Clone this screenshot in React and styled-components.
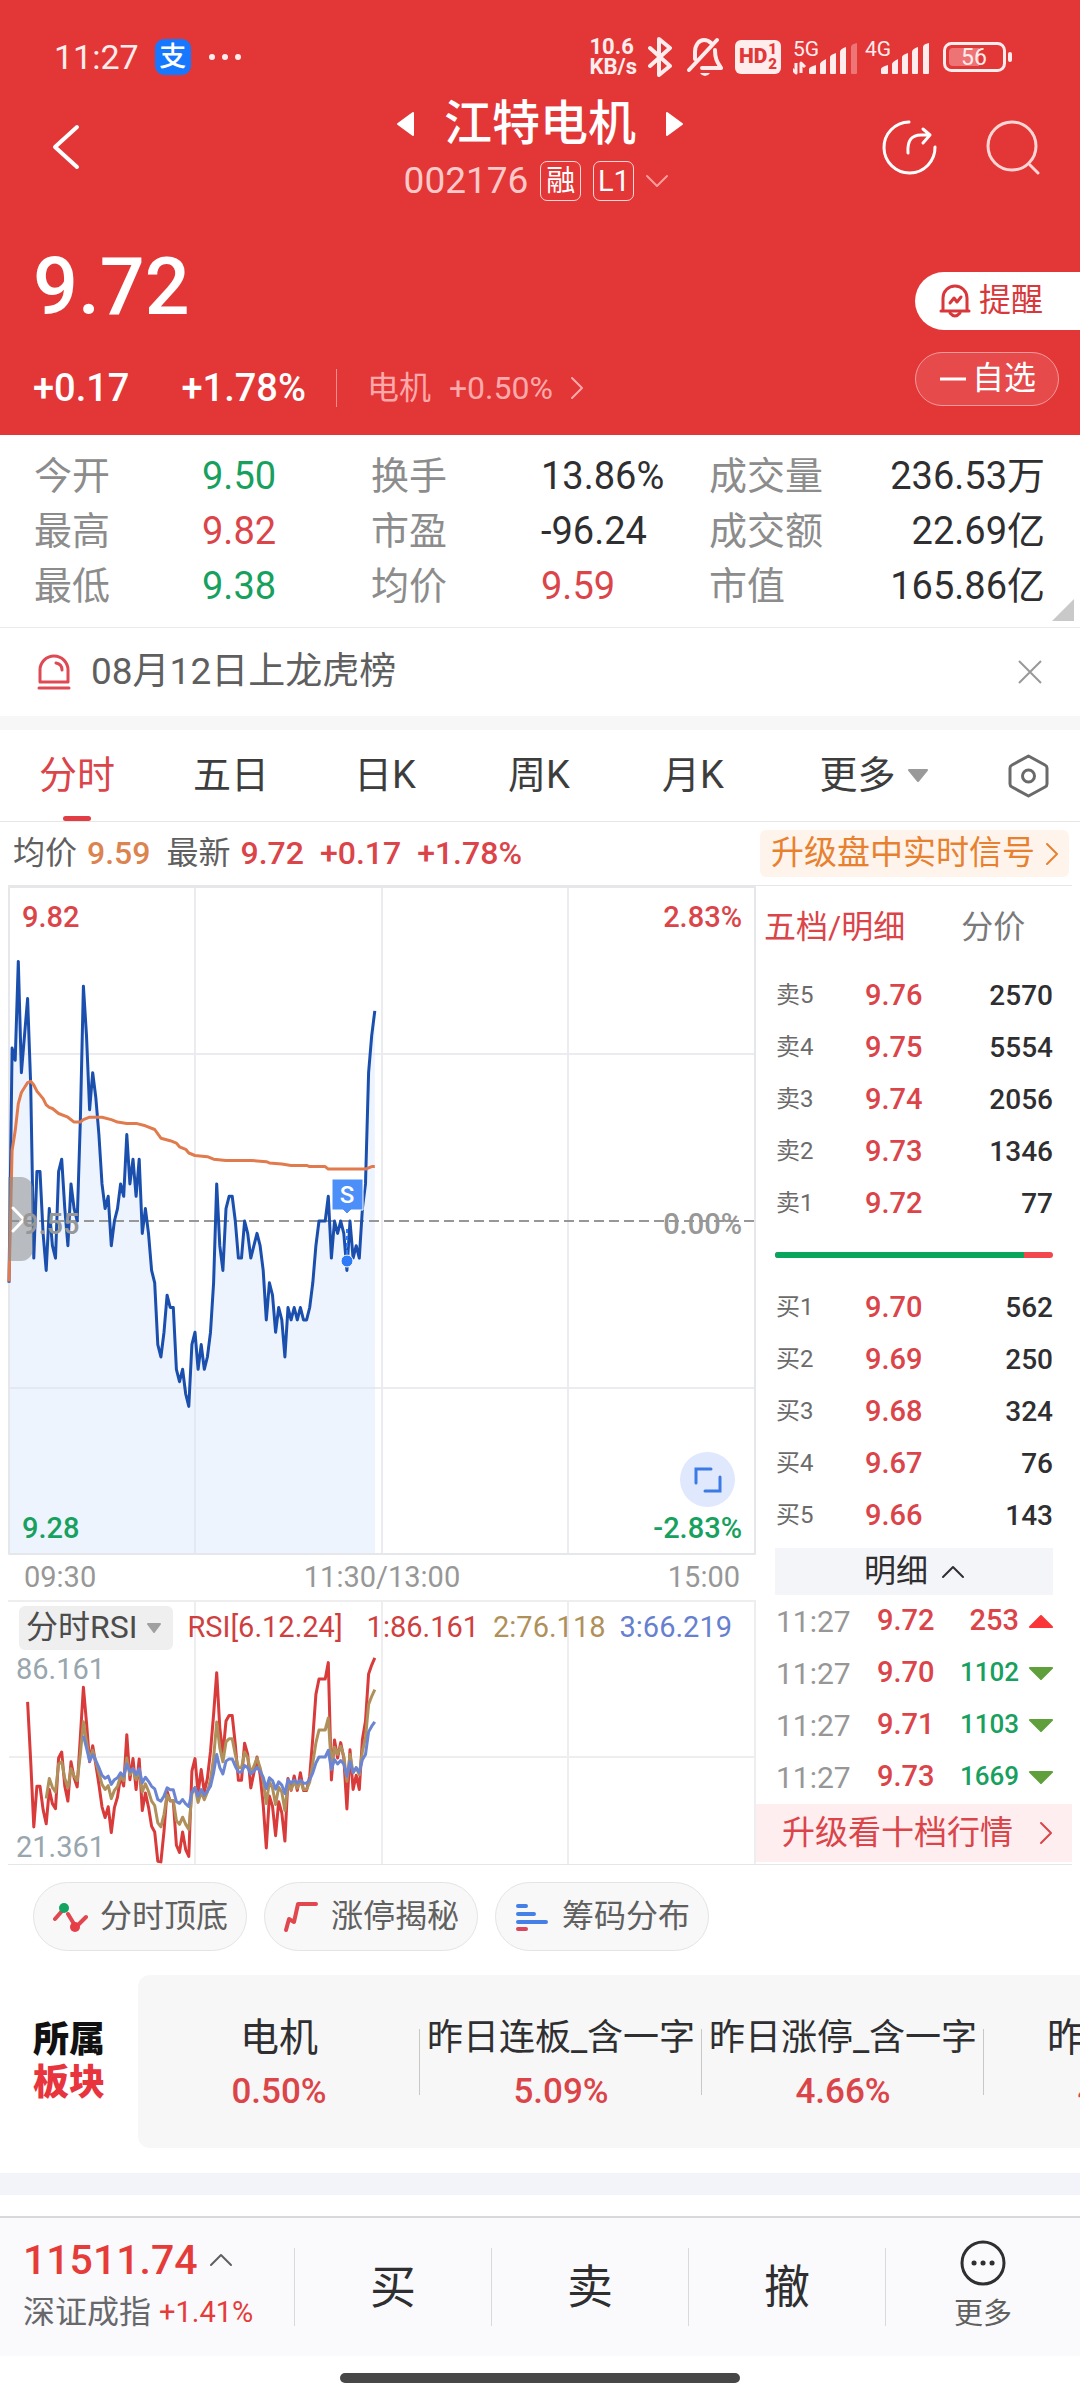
import React from 'react'
import styled, { createGlobalStyle } from 'styled-components'

const red = '#e33637'
const up = '#db4449'
const down = '#17a05e'
const ink = '#2f2f31'
const grey = '#8c8c8c'

const GlobalStyle = createGlobalStyle`
    * {
        box-sizing: border-box;
    }
    body {
        margin: 0;
        background-color: #fff;
        color: ${ink};
        font-family: Roboto, "Noto Sans CJK SC", sans-serif;
        line-height: 1.3;
    }
    button {
        font: inherit;
        color: inherit;
        background: none;
        border: 0;
        padding: 0;
        cursor: pointer;
    }
    a {
        color: inherit;
        text-decoration: none;
    }
    svg {
        display: block;
        flex: none;
    }
    h1, p, dl, dd, ul {
        margin: 0;
        padding: 0;
        list-style: none;
    }
`

// ---------- header ----------
const Header = styled.header`
    background-color: ${red};
    color: #fff;
    padding-bottom: 24px;
`
const StatusBar = styled.div`
    display: flex;
    align-items: center;
    padding: 33px 68px 0 54px;
    height: 81px;
    color: #ffecec;
`
const Clock = styled.span`
    font-size: 34px;
    line-height: 48px;
    margin-right: 16px;
`
const AppBadge = styled.span`
    width: 36px;
    height: 36px;
    border-radius: 9px;
    background-color: #1677ff;
    color: #fff;
    font-size: 27px;
    font-weight: 500;
    line-height: 36px;
    text-align: center;
    margin-right: 17px;
`
const StatusIcons = styled.div`
    display: flex;
    align-items: center;
    margin-left: auto;
`
const NetSpeed = styled.div`
    font-size: 22px;
    font-weight: 700;
    line-height: 20px;
    margin-right: 11px;
`
const HdBadge = styled.span`
    display: flex;
    align-items: center;
    justify-content: center;
    width: 46px;
    height: 34px;
    border-radius: 6px;
    background-color: #ffecec;
    color: ${red};
    font-size: 21px;
    font-weight: 900;
    margin: 0 12px;
`
const HdLines = styled.span`
    display: flex;
    flex-direction: column;
    margin-left: 1px;
    font-size: 15px;
    line-height: 15px;
`
const Signal = styled.span`
    position: relative;
    display: flex;
    align-items: flex-end;
    width: 66px;
    height: 36px;
    margin-right: ${props => props.wide ? '6px' : '12px'};
`
const SignalLabel = styled.span`
    position: absolute;
    left: 0;
    top: 0;
    font-size: 21px;
    line-height: 20px;
`
const TitleBar = styled.div`
    display: grid;
    grid-template-columns: 1fr auto 1fr;
    align-items: center;
    padding: 0 40px 0 54px;
    margin-top: 9px;
`
const TitleBlock = styled.div`
    display: flex;
    flex-direction: column;
    align-items: center;
    margin-right: 14px;
`
const NameRow = styled.div`
    display: flex;
    align-items: center;
    gap: 30px;
`
const StockName = styled.h1`
    font-size: 48px;
    font-weight: 500;
    line-height: 68px;
`
const CodeRow = styled.div`
    display: flex;
    align-items: center;
    gap: 12px;
    margin-right: 8px;
    font-size: 37px;
    line-height: 46px;
    color: #ffc9c9;
`
const Tag = styled.span`
    width: 41px;
    height: 40px;
    border: 1px solid #ffd5d5;
    border-radius: 7px;
    color: #fff;
    font-size: 29px;
    line-height: 38px;
    text-align: center;
`
const HeaderTools = styled.div`
    display: flex;
    justify-content: flex-end;
    gap: 49px;
`
const IconButton = styled.button`
    display: flex;
`
const PriceArea = styled.div`
    display: flex;
    justify-content: space-between;
    margin-top: 43px;
`
const PriceBlock = styled.div`
    padding-left: 33px;
`
const BigPrice = styled.div`
    font-size: 79px;
    font-weight: 500;
    line-height: 80px;
`
const ChangeRow = styled.div`
    display: flex;
    align-items: center;
    margin-top: 38px;
    font-size: 38px;
    font-weight: 500;
    line-height: 46px;
`
const Change = styled.span`
    margin-right: ${props => props.gap};
`
const SectorLink = styled.a`
    display: flex;
    align-items: center;
    gap: 18px;
    margin-left: 30px;
    font-size: 32px;
    font-weight: 400;
    color: #ffa9aa;
`
const Bar = styled.span`
    width: 1px;
    height: 38px;
    background-color: #f58d8e;
`
const HeaderActions = styled.div`
    display: flex;
    flex-direction: column;
    align-items: flex-start;
    gap: 22px;
    padding-top: 25px;
`
const RemindButton = styled.button`
    display: flex;
    align-items: center;
    gap: 8px;
    height: 58px;
    padding: 0 37px 0 24px;
    border-radius: 29px 0 0 29px;
    background-color: #fff;
    color: #d8383b;
    font-size: 32px;
`
const WatchButton = styled.button`
    display: flex;
    align-items: center;
    gap: 6px;
    height: 54px;
    padding: 0 22px 0 24px;
    border: 1px solid #f59a9b;
    border-radius: 27px;
    background-color: #e64a4b;
    color: #fff;
    font-size: 32px;
`

// ---------- quote figures ----------
const Stats = styled.dl`
    position: relative;
    display: grid;
    grid-template-columns: 168fr 169fr 170fr 168fr 130fr 206fr;
    padding: 14px 35px 13px 34px;
    border-bottom: 1px solid #ebebeb;
    font-size: 38px;
    line-height: 55px;
    white-space: nowrap;
`
const StatLabel = styled.dt`
    color: ${grey};
`
const StatValue = styled.dd`
    color: ${props => props.tone || ink};
    text-align: ${props => props.end ? 'right' : 'left'};
`
const Corner = styled.span`
    position: absolute;
    right: 6px;
    bottom: 6px;
    border-left: 22px solid transparent;
    border-bottom: 22px solid #c9c9c9;
`
const Notice = styled.div`
    display: flex;
    align-items: center;
    gap: 20px;
    height: 88px;
    padding: 0 37px;
    font-size: 37px;
    color: #5f5f5f;
`
const NoticeText = styled.p`
    flex: 1;
`
const Band = styled.div`
    height: ${props => props.size};
    background-color: ${props => props.tint};
`

// ---------- period tabs ----------
const Tabs = styled.nav`
    display: grid;
    grid-template-columns: repeat(5, 154fr) 207fr 103fr;
    height: 92px;
    border-bottom: 1px solid #e6e6e6;
`
const Tab = styled.button`
    position: relative;
    display: flex;
    align-items: center;
    justify-content: center;
    gap: 12px;
    font-size: 38px;
    color: ${props => props.active ? up : '#3d3d3d'};
    &::after {
        content: "";
        position: absolute;
        bottom: 0;
        width: 28px;
        height: 5px;
        border-radius: 3px;
        background-color: ${props => props.active ? '#e23c45' : 'transparent'};
    }
`
const InfoLine = styled.div`
    display: flex;
    align-items: center;
    height: 64px;
    margin: 0 8px;
    padding: 0 3px 0 5px;
    border-bottom: 1px solid #e6e6e6;
    font-size: 32px;
    color: #5f5f5f;
    white-space: nowrap;
`
const Info = styled.span`
    color: ${props => props.tone};
    font-weight: 500;
    margin: 0 16px 0 ${props => props.before || '0'};
`
const SignalLink = styled.a`
    display: flex;
    align-items: center;
    gap: 11px;
    height: 47px;
    margin-left: auto;
    padding: 0 11px;
    border-radius: 6px;
    background-color: #fff4ec;
    color: #e8812f;
    font-size: 33px;
`

// ---------- chart ----------
const Board = styled.main`
    display: grid;
    grid-template-columns: minmax(0, 748fr) minmax(0, 316fr);
    margin: 0 8px;
    border-bottom: 1px solid #e6e6e6;
`
const Plot = styled.div`
    position: relative;
    height: ${props => props.size};
`
const PlotSvg = styled.svg`
    position: absolute;
    left: 0;
    top: 0;
    width: 100%;
    height: 100%;
    overflow: visible;
`
const PlotLabel = styled.span`
    position: absolute;
    top: ${props => props.top};
    ${props => props.end ? 'right: 14px' : 'left: 14px'};
    font-size: 29px;
    font-weight: 500;
    line-height: 32px;
    color: ${props => props.tone};
`
const Handle = styled.button`
    position: absolute;
    left: 0;
    top: 291px;
    display: flex;
    align-items: center;
    width: 25px;
    height: 84px;
    padding-left: 4px;
    border-radius: 0 12px 12px 0;
    background-color: rgba(140, 140, 140, 0.55);
`
const ExpandButton = styled.button`
    position: absolute;
    right: 21px;
    bottom: 48px;
    display: flex;
    align-items: center;
    justify-content: center;
    width: 55px;
    height: 55px;
    border-radius: 50%;
    background-color: #dfe8fd;
`
const TimeAxis = styled.div`
    display: flex;
    justify-content: space-between;
    padding: 0 16px;
    height: 45px;
    font-size: 29px;
    line-height: 45px;
    color: #979797;
`
const RsiHead = styled.div`
    position: relative;
    display: flex;
    align-items: center;
    gap: 14px;
    padding: 6px 0 0 11px;
    white-space: nowrap;
`
const RsiSelect = styled.button`
    display: flex;
    align-items: center;
    gap: 10px;
    height: 44px;
    padding: 0 12px 0 7px;
    border-radius: 6px;
    background-color: #efefef;
    font-size: 32px;
    color: #4c4c4c;
`
const RsiValue = styled.span`
    color: ${props => props.tone};
    margin-right: ${props => props.after || '0'};
    font-size: 29px;
`
const RsiLabel = styled.span`
    position: absolute;
    left: 8px;
    top: ${props => props.top};
    font-size: 29px;
    line-height: 32px;
    color: #98a6ae;
`

// ---------- order book ----------
const Side = styled.aside`
    display: flex;
    flex-direction: column;
`
const SideTabs = styled.div`
    display: flex;
    gap: 56px;
    height: 84px;
    padding-left: 8px;
`
const SideTab = styled.button`
    font-size: 32px;
    color: ${props => props.active ? up : '#7a7a7a'};
    white-space: nowrap;
`
const Book = styled.table`
    margin: 0 19px 0 20px;
    border-collapse: collapse;
    table-layout: fixed;
    td, th {
        height: 52px;
        padding: 0;
        font-weight: 400;
        text-align: left;
        white-space: nowrap;
    }
`
const Level = styled.th`
    width: 89px;
    font-size: 24px;
    color: #6b6b6b;
`
const Price = styled.td`
    font-size: 29px;
    font-weight: 500 !important;
    color: ${up};
`
const Qty = styled.td`
    font-size: 28px;
    font-weight: 500 !important;
    text-align: right !important;
`
const Ratio = styled.div`
    display: flex;
    height: 6px;
    margin: 22px 19px 24px;
    border-radius: 3px;
    overflow: hidden;
    background-color: #f2484d;
`
const RatioSell = styled.span`
    background-color: #08a65d;
`
const DetailToggle = styled.button`
    display: flex;
    align-items: center;
    justify-content: center;
    gap: 14px;
    height: 47px;
    margin: 6px 19px 0;
    background-color: #f4f5f9;
    font-size: 32px;
`
const Time = styled.td`
    width: 101px;
    font-size: 30px;
    color: #979797;
`
const TradePrice = styled(Price)`
    width: 70px;
`
const Volume = styled.td`
    font-size: ${props => props.rise ? '29px' : '26px'};
    font-weight: 500 !important;
    color: ${props => props.rise ? up : down};
    text-align: right !important;
`
const Arrow = styled.td`
    width: 34px;
    svg {
        margin-left: auto;
    }
`
const TenLink = styled.a`
    display: flex;
    align-items: center;
    justify-content: space-between;
    height: 58px;
    margin-top: 1px;
    padding: 0 20px 0 26px;
    background-color: #feeeef;
    color: ${up};
    font-size: 33px;
    white-space: nowrap;
`

// ---------- lower part ----------
const Chips = styled.div`
    display: flex;
    gap: 17px;
    padding: 17px 33px 24px;
`
const Chip = styled.button`
    display: flex;
    align-items: center;
    gap: 12px;
    height: 69px;
    padding: 0 18px;
    border: 1px solid #e4e4e4;
    border-radius: 35px;
    background-color: #f8f8f8;
    color: #606060;
    font-size: 32px;
`
const Sectors = styled.section`
    display: flex;
    align-items: center;
    padding: 0 0 25px 33px;
    overflow: hidden;
`
const SectorTitle = styled.div`
    flex: none;
    width: 105px;
    font-size: 36px;
    font-weight: 900;
    line-height: 43px;
    color: #111;
`
const Hot = styled.div`
    color: #e8343d;
`
const SectorList = styled.ul`
    flex: 1;
    display: flex;
    min-width: 0;
    overflow: hidden;
    height: 173px;
    align-items: center;
    padding-top: 6px;
    border-radius: 12px 0 0 12px;
    background-color: #f7f7f7;
`
const Sector = styled.li`
    position: relative;
    flex: none;
    width: 282px;
    text-align: center;
    white-space: nowrap;
    &:not(:last-child)::after {
        content: "";
        position: absolute;
        right: 0;
        top: 18px;
        width: 1px;
        height: 66px;
        background-color: #c8c8c8;
    }
`
const SectorName = styled.div`
    font-size: ${props => props.long ? '36px' : '39px'};
    line-height: 54px;
`
const SectorChange = styled.div`
    font-size: 35px;
    font-weight: 500;
    line-height: 54px;
    color: ${up};
`
const BottomBar = styled.footer`
    display: grid;
    grid-template-columns: 294fr 197fr 197fr 197fr 195fr;
    align-items: center;
    height: 140px;
    margin-top: 21px;
    border-top: 2px solid #d9d9db;
    background-color: #fafafc;
`
const IndexBlock = styled.button`
    padding-left: 23px;
    text-align: left;
    white-space: nowrap;
`
const IndexValue = styled.div`
    display: flex;
    align-items: center;
    gap: 12px;
    font-size: 41px;
    font-weight: 500;
    line-height: 50px;
    color: #e53c3a;
`
const IndexName = styled.div`
    display: flex;
    align-items: center;
    gap: 8px;
    font-size: 32px;
    line-height: 54px;
    color: #68686c;
`
const IndexChange = styled.span`
    font-size: 29px;
    color: #e53c3a;
`
const TradeButton = styled.button`
    height: 78px;
    border-left: 1px solid #d9d9db;
    font-size: 46px;
    line-height: 60px;
`
const MoreButton = styled(TradeButton)`
    display: flex;
    flex-direction: column;
    align-items: center;
    justify-content: center;
    gap: 8px;
    font-size: 29px;
    line-height: 40px;
    color: #606060;
`
const HomeArea = styled.div`
    padding: 17px 0 16px;
`
const HomeIndicator = styled.div`
    width: 37%;
    height: 10px;
    margin: 0 auto;
    border-radius: 5px;
    background-color: #474747;
`

// ---------- icons ----------
const Chevron = ({ dir = 'right', w, h, color, stroke = 3 }) => {
    const points = {
        right: `1,1 ${w - 1},${h / 2} 1,${h - 1}`,
        left: `${w - 1},1 1,${h / 2} ${w - 1},${h - 1}`,
        up: `1,${h - 1} ${w / 2},1 ${w - 1},${h - 1}`,
        down: `1,1 ${w / 2},${h - 1} ${w - 1},1`,
    }
    return (
        <svg width={w} height={h} overflow="visible" fill="none" stroke={color} strokeWidth={stroke} strokeLinecap="round" strokeLinejoin="round">
            <polyline points={points[dir]} />
        </svg>
    )
}

const Triangle = ({ dir, w, h, color }) => {
    const points = {
        left: `${w - 1},1 1,${h / 2} ${w - 1},${h - 1}`,
        right: `1,1 ${w - 1},${h / 2} 1,${h - 1}`,
        up: `1,${h - 1} ${w / 2},1 ${w - 1},${h - 1}`,
        down: `1,1 ${w - 1},1 ${w / 2},${h - 1}`,
    }
    return (
        <svg width={w} height={h} fill={color} stroke={color} strokeWidth="2" strokeLinejoin="round">
            <polygon points={points[dir]} />
        </svg>
    )
}

const SignalBars = ({ weak }) => (
    <svg width="66" height="36" fill="currentColor">
        <path d="M16 34v-4q0-2 7-4v8q0 1-1 1h-5q-1 0-1-1z" />
        <path d="M27 34V25q0-2 6-5v14q0 1-1 1h-4q-1 0-1-1z" />
        <path d="M37 34V18q0-2 6-4v20q0 1-1 1h-4q-1 0-1-1z" />
        <path d="M47 34V13q0-3 6-5v26q0 1-1 1h-4q-1 0-1-1z" />
        <path d="M58 34V8q0-3 6-4v30q0 1-1 1h-4q-1 0-1-1z" opacity={weak ? 0.35 : 1} />
        {weak && <path d="M3 24v10l-4-4M8 34V24l4 4" fill="none" stroke="currentColor" strokeWidth="3" strokeLinejoin="round" />}
    </svg>
)

const Bluetooth = () => (
    <svg width="24" height="40" fill="none" stroke="currentColor" strokeWidth="4" strokeLinejoin="round" strokeLinecap="round">
        <path d="M2 11l20 18-11 9V2l11 9L2 29" />
    </svg>
)

const BellOff = () => (
    <svg width="36" height="40" fill="none" stroke="currentColor" strokeWidth="4" strokeLinecap="round" strokeLinejoin="round">
        <path d="M8 22v-7C8 8 12 3 17 3c3 0 5 1 7 3M28 13c0 10 3 13 6 18H15M2 33L30 3" />
        <path d="M13 36h10q-2 3-5 3t-5-3z" fill="currentColor" stroke="none" />
    </svg>
)

const Battery = () => (
    <svg width="69" height="30" fill="none">
        <rect x="1.500" y="1.500" width="60" height="27" rx="7" stroke="currentColor" strokeWidth="3" />
        <path d="M10 6h26v18H10q-4 0-4-4V10q0-4 4-4z" fill="#ee7374" />
        <rect x="65" y="10" width="4" height="10" rx="2" fill="currentColor" />
        <text x="31" y="23" textAnchor="middle" fontSize="23" fill="currentColor">56</text>
    </svg>
)

const ShareIcon = () => (
    <svg width="55" height="55" fill="none" stroke="#fff" strokeWidth="3" strokeLinecap="round" strokeLinejoin="round">
        <path d="M27 2A25.500 25.500 0 1 0 53 27" />
        <path d="M26 33c-1-13 4-18 13-18h9M41 9l7 6-7 8" />
    </svg>
)

const SearchIcon = () => (
    <svg width="54" height="55" fill="none" stroke="#ffd5d5" strokeWidth="3" strokeLinecap="round">
        <circle cx="26" cy="26" r="24" />
        <path d="M44 45l8 8" />
    </svg>
)

const BellIcon = () => (
    <svg width="32" height="34" fill="none" stroke="#d8383b" strokeWidth="3" strokeLinecap="round" strokeLinejoin="round">
        <path d="M4 25V14a12 12 0 0 1 24 0v11M2 27h28" />
        <path d="M11 29q5 6 10 0M11 19l4-5 3 4 4-5" />
    </svg>
)

const AlarmIcon = () => (
    <svg width="34" height="36" fill="none" stroke="#dd4a53" strokeWidth="3" strokeLinecap="round" strokeLinejoin="round">
        <path d="M3 28V16a14 14 0 0 1 28 0v12zM2 34h30M19 9q6 1 6 7" />
    </svg>
)

const CloseIcon = () => (
    <svg width="26" height="26" stroke="#999" strokeWidth="2">
        <path d="M2 2l22 22M24 2L2 24" />
    </svg>
)

const HexIcon = () => (
    <svg width="41" height="44" fill="none" stroke="#6a6a6a" strokeWidth="3" strokeLinejoin="round">
        <path d="M20.500 2L37 11q2 1 2 3v16q0 2-2 3L20.500 42 4 33q-2-1-2-3V14q0-2 2-3z" />
        <circle cx="20.500" cy="22" r="6" />
    </svg>
)

const PeakIcon = () => (
    <svg width="36" height="34" fill="none" strokeWidth="4" strokeLinecap="round">
        <path d="M3 19l7-8M16 14l6 10M26 25l8-8" stroke="#e0474e" />
        <circle cx="12" cy="8" r="5" fill="#12a461" />
        <circle cx="23" cy="27" r="5" fill="#e73d47" />
    </svg>
)

const LimitIcon = () => (
    <svg width="36" height="34" fill="none" stroke="#e0474e" strokeWidth="4" strokeLinecap="round" strokeLinejoin="round">
        <path d="M3 30l3-11 5 3 4-18h18" />
    </svg>
)

const StackIcon = () => (
    <svg width="36" height="34" fill="none" stroke="#4580e6" strokeWidth="4" strokeLinecap="round">
        <path d="M4 6h8M4 14h16M4 22h28" />
        <path d="M4 29h8" stroke="#d9485a" />
    </svg>
)

const MoreIcon = () => (
    <svg width="46" height="46" fill="none" stroke={ink} strokeWidth="3">
        <circle cx="23" cy="23" r="21" />
        <path d="M14 23h.1M23 23h.1M32 23h.1" strokeWidth="5" strokeLinecap="round" />
    </svg>
)

// ---------- data ----------
const stats = [
    ['今开', '9.50', down], ['换手', '13.86%'], ['成交量', '236.53万'],
    ['最高', '9.82', up], ['市盈', '-96.24'], ['成交额', '22.69亿'],
    ['最低', '9.38', down], ['均价', '9.59', up], ['市值', '165.86亿'],
]

const sells = [['卖5', '9.76', 2570], ['卖4', '9.75', 5554], ['卖3', '9.74', 2056], ['卖2', '9.73', 1346], ['卖1', '9.72', 77]]
const buys = [['买1', '9.70', 562], ['买2', '9.69', 250], ['买3', '9.68', 324], ['买4', '9.67', 76], ['买5', '9.66', 143]]
const trades = [['9.72', 253, true], ['9.70', 1102], ['9.71', 1103], ['9.73', 1669]]
const sectors = [['电机', '0.50%'], ['昨日连板_含一字', '5.09%'], ['昨日涨停_含一字', '4.66%'], ['昨日涨停', '4.25%']]

// price per minute, in cents away from the previous close (9.55)
const ticks = [
    -5, 14, 13, 21, 12, 15, 18, 11, -3, 4, 4, -1, -4, 1, -2, -3, 4, 5, 1, -2, 3, 1, 0, 8, 19, 15, 9, 12, 10, 7,
    3, 1, 2, -2, 0, 1, 3, 2, 7, 3, 5, 2, 5, -1, 1, -1, -4, -5, -10, -11, -9, -6, -7, -7, -12, -13, -12, -14, -15, -10,
    -9, -12, -10, -12, -11, -9, -5, 3, -2, -4, 1, 2, 2, 0, -3, -3, 0, -1, -3, -2, -1, -2, -4, -8, -5, -6, -9, -7, -8, -11,
    -7, -8, -7, -8, -7, -8, -8, -7, -5, -2, 0, 0, 0, 2, -3, 0, -1, 0, -1, -4, 0, -3, -2, -3, 1, 3, 12, 15, 17,
]
const average = [
    [0, -4.9], [1, 5.7], [2, 7.3], [3, 9.5], [4, 10.4], [5, 10.8], [6, 11.2], [7, 11.3], [8, 11], [9, 10.5], [10, 10.2], [11, 9.9],
    [12, 9.4], [13, 9.2], [14, 9.1], [16, 8.7], [19, 8.4], [21, 8], [23, 8], [24, 8.2], [26, 8.4], [30, 8.4], [33, 8.2], [35, 8],
    [38, 7.9], [41, 7.9], [44, 7.7], [47, 7.4], [49, 6.7], [52, 6.5], [54, 6.3], [55, 6], [57, 5.8], [58, 5.5], [60, 5.3], [64, 5.2],
    [66, 5], [70, 4.9], [78, 4.9], [83, 4.8], [84, 4.7], [88, 4.6], [91, 4.5], [96, 4.5], [97, 4.4], [102, 4.4], [103, 4.2],
    [113, 4.2], [115, 4.2], [117, 4.4], [118, 4.4],
]
const rsi6 = [
    72.2, 53.4, 32.5, 45.4, 45.4, 38, 33.5, 44.4, 39.9, 38.3, 54.4, 56.3, 45.4, 40.7, 53.2, 48.1, 45.2, 60.8, 76.9, 65.6,
    53.2, 58.3, 52.3, 46, 38.9, 35.5, 38.9, 30.7, 38.6, 42, 48.6, 45.5, 61.8, 47.5, 54.2, 44.4, 54.1, 37.7, 43.3, 38.8,
    32.7, 30.9, 21.6, 21.4, 31.1, 43.8, 40.7, 40.7, 26.7, 24.4, 30.9, 25.3, 23.1, 50.2, 54.2, 43.3, 50.7, 43.6, 47.9, 56.5,
    68.2, 81.5, 64, 55.5, 66.1, 67.9, 67.9, 58.7, 47.3, 47.3, 59.1, 55.5, 44.9, 49.7, 54.7, 49.1, 39.6, 25.8, 42.3, 39.1,
    29.7, 40.5, 37, 28, 47.9, 44.1, 48.7, 44.1, 49.7, 44.1, 44.1, 48.6, 60.8, 74.6, 79.5, 79.5, 79.5, 84.7, 47.4, 60.1,
    54.4, 59.3, 54.4, 38.2, 57, 44.4, 48.9, 44.4, 60.3, 66.1, 81.1, 83.9, 86.2,
]
const rsi12 = [
    41.5, 47.9, 45.1, 43.6, 52.5, 53.2, 47.9, 44.9, 51, 48.6, 47.2, 55.5, 65.9, 59.7, 53.9, 56.8, 53.2, 49.7, 46, 44.4,
    45.6, 41.5, 44.1, 45.4, 48.6, 47.2, 54.4, 49.1, 51, 47.5, 50.7, 43.6, 46.2, 43.8, 40.7, 39.3, 33.8, 32.5, 36.4, 42.6,
    40.9, 40.9, 34.5, 33.3, 35.6, 33.3, 31.7, 43, 45.1, 40.3, 43.6, 41.1, 43.6, 47.5, 54.4, 65.8, 57.6, 53.2, 59.5, 60.5,
    60.5, 55.5, 51.3, 51.3, 56.3, 54.4, 49.6, 51.8, 54.4, 51.3, 47, 39.9, 46.8, 44.9, 39.6, 45.1, 43.6, 37.7, 46.5, 44.4,
    46.8, 44.8, 47.2, 44.4, 44.4, 46.8, 52.8, 59.2, 63.3, 63.3, 63.3, 67.1, 51.8, 57.8, 55.5, 58.1, 55, 47, 55.5, 49.7,
    51.3, 49.1, 56.5, 60.8, 71.4, 74, 76.1,
]
const rsi24 = [
    61.5, 57.6, 53.4, 55.5, 53.6, 51.3, 48.9, 47.9, 48.6, 46, 47.5, 48.1, 49.7, 48.6, 52.5, 50, 51, 49.1, 51, 46.5,
    48.3, 47, 45.4, 44.6, 41.2, 40.7, 42.3, 44.9, 44.3, 44.3, 40.5, 40, 41.2, 39.8, 39, 43.6, 44.9, 42.3, 44.4, 42.6,
    43.8, 45.4, 49.7, 55.5, 51.3, 49.3, 53.4, 54.1, 54.1, 51.8, 49.9, 49.9, 52, 51.3, 49.3, 50.2, 51.4, 50.2, 48.3, 44.7,
    48.1, 47.2, 44.5, 46.8, 45.8, 43.1, 47.5, 46.4, 47.4, 46.4, 47.4, 46.4, 46.4, 47.5, 49.7, 52.8, 54.7, 54.7, 54.7, 56.8,
    50.7, 53.9, 52.5, 53.6, 52.5, 48.6, 53.2, 49.8, 51.3, 49.8, 53.9, 55.5, 62.7, 64.5, 65.9,
]

const minuteX = minute => 1 + minute * 3.1
const tickY = tick => 335 - tick * 12.36
const rsiY = value => 58 + (86.16 - value) * 3.148
const rsiLine = (values, start) => values.map((v, i) => `${minuteX(start + i).toFixed(1)},${rsiY(v).toFixed(1)}`).join(' ')

const PriceChart = () => {
    const line = ticks.map((t, i) => `${minuteX(i).toFixed(1)},${tickY(t).toFixed(1)}`).join(' ')
    const avg = average.map(([m, t]) => `${minuteX(m).toFixed(1)},${tickY(t).toFixed(1)}`).join(' ')
    return (
        <Plot size="669px">
            <PlotSvg viewBox="0 0 748 669" preserveAspectRatio="none" fill="none" strokeLinejoin="round">
                <polygon points={`1,668 ${line} 367,668`} fill="#eef4fe" />
                <path d="M187 1v667M374 1v667M560 1v667M1 168h746M1 502h746" stroke="#dde0e6" strokeOpacity="0.6" strokeWidth="2" />
                <rect x="1" y="1" width="746" height="667" stroke="#e6e7ea" strokeWidth="2" />
                <path d="M1 335h746" stroke="#979797" strokeWidth="2" strokeDasharray="10 5" />
                <polyline points={line} stroke="#1b4fae" strokeWidth="3" />
                <polyline points={avg} stroke="#e17a4c" strokeWidth="3" />
                <path d="M339 343v28" stroke="#2d7bf7" strokeWidth="2" strokeDasharray="4 3" />
                <path d="M324 293h31v31h-12l-4 4-4-4h-11z" fill="#4d8ff9" stroke="#fff" strokeWidth="1" />
                <text x="339" y="317" textAnchor="middle" fontSize="24" fontWeight="500" fill="#fff">S</text>
                <circle cx="339" cy="375" r="6" fill="#2d7bf7" stroke="#fff" />
            </PlotSvg>
            <Handle aria-label="展开">
                <Chevron w={13} h={25} color="#fff" />
            </Handle>
            <PlotLabel top="15px" tone={up}>9.82</PlotLabel>
            <PlotLabel top="15px" tone={up} end>2.83%</PlotLabel>
            <PlotLabel top="322px" tone="#979797">9.55</PlotLabel>
            <PlotLabel top="322px" tone="#979797" end>0.00%</PlotLabel>
            <PlotLabel top="626px" tone={down}>9.28</PlotLabel>
            <PlotLabel top="626px" tone={down} end>-2.83%</PlotLabel>
            <ExpandButton aria-label="全屏">
                <svg width="28" height="28" fill="none" stroke="#3c7ae4" strokeWidth="3" strokeLinecap="round">
                    <path d="M2 17V3h15M26 11v14H11" />
                </svg>
            </ExpandButton>
        </Plot>
    )
}

const RsiChart = () => (
    <Plot size="264px">
        <PlotSvg viewBox="0 0 748 264" preserveAspectRatio="none" fill="none" strokeLinejoin="round">
            <path d="M0 1h748M1 157h746M187 1v263M374 1v263M560 1v263M747 1v263" stroke="#eeeef0" strokeWidth="2" />
            <polyline points={rsiLine(rsi6, 6)} stroke="#d93a3a" strokeWidth="3" />
            <polyline points={rsiLine(rsi12, 12)} stroke="#b0905a" strokeWidth="3" />
            <polyline points={rsiLine(rsi24, 24)} stroke="#6c85d2" strokeWidth="3" />
        </PlotSvg>
        <RsiHead>
            <RsiSelect>分时RSI<Triangle dir="down" w={14} h={10} color="#a0a0a0" /></RsiSelect>
            <RsiValue tone="#cf3f40" after="10px">RSI[6.12.24]</RsiValue>
            <RsiValue tone="#cf3f40">1:86.161</RsiValue>
            <RsiValue tone="#b0905a">2:76.118</RsiValue>
            <RsiValue tone="#6680cf">3:66.219</RsiValue>
        </RsiHead>
        <RsiLabel top="53px">86.161</RsiLabel>
        <RsiLabel top="231px">21.361</RsiLabel>
    </Plot>
)

const BookTable = ({ rows }) => (
    <Book>
        <tbody>
            {rows.map(([level, price, qty]) => (
                <tr key={level}>
                    <Level scope="row">{level}</Level>
                    <Price>{price}</Price>
                    <Qty>{qty}</Qty>
                </tr>
            ))}
        </tbody>
    </Book>
)

const App = () => {
    const [period, setPeriod] = React.useState('分时')
    const [noticeOpen, setNoticeOpen] = React.useState(true)

    return (
        <>
            <GlobalStyle />
            <Header>
                <StatusBar>
                    <Clock>11:27</Clock>
                    <AppBadge>支</AppBadge>
                    <svg width="34" height="8" fill="currentColor">
                        <circle cx="4" cy="4" r="3" />
                        <circle cx="17" cy="4" r="3" />
                        <circle cx="30" cy="4" r="3" />
                    </svg>
                    <StatusIcons>
                        <NetSpeed>10.6<br />KB/s</NetSpeed>
                        <Bluetooth />
                        <svg width="15" height="1" />
                        <BellOff />
                        <HdBadge>HD<HdLines><span>1</span><span>2</span></HdLines></HdBadge>
                        <Signal wide>
                            <SignalLabel>5G</SignalLabel>
                            <SignalBars weak />
                        </Signal>
                        <Signal>
                            <SignalLabel>4G</SignalLabel>
                            <SignalBars />
                        </Signal>
                        <Battery />
                    </StatusIcons>
                </StatusBar>
                <TitleBar>
                    <IconButton aria-label="返回"><Chevron dir="left" w={24} h={42} color="#fff" stroke={4} /></IconButton>
                    <TitleBlock>
                        <NameRow>
                            <IconButton aria-label="上一只"><Triangle dir="left" w={17} h={24} color="#fff" /></IconButton>
                            <StockName>江特电机</StockName>
                            <IconButton aria-label="下一只"><Triangle dir="right" w={17} h={24} color="#fff" /></IconButton>
                        </NameRow>
                        <CodeRow>
                            002176
                            <Tag>融</Tag>
                            <Tag>L1</Tag>
                            <Chevron dir="down" w={22} h={12} color="#ff9c9d" stroke={2} />
                        </CodeRow>
                    </TitleBlock>
                    <HeaderTools>
                        <IconButton aria-label="分享"><ShareIcon /></IconButton>
                        <IconButton aria-label="搜索"><SearchIcon /></IconButton>
                    </HeaderTools>
                </TitleBar>
                <PriceArea>
                    <PriceBlock>
                        <BigPrice>9.72</BigPrice>
                        <ChangeRow>
                            <Change gap="52px">+0.17</Change>
                            <Change gap="30px">+1.78%</Change>
                            <Bar />
                            <SectorLink href="#">
                                <span>电机</span>
                                <span>+0.50%</span>
                                <Chevron w={12} h={22} color="#ffa9aa" stroke={2} />
                            </SectorLink>
                        </ChangeRow>
                    </PriceBlock>
                    <HeaderActions>
                        <RemindButton><BellIcon />提醒</RemindButton>
                        <WatchButton>
                            <svg width="26" height="4"><path d="M0 2h26" stroke="#fff" strokeWidth="3" /></svg>
                            自选
                        </WatchButton>
                    </HeaderActions>
                </PriceArea>
            </Header>

            <Stats>
                {stats.map(([label, value, tone], i) => (
                    <React.Fragment key={label}>
                        <StatLabel>{label}</StatLabel>
                        <StatValue tone={tone} end={i % 3 === 2}>{value}</StatValue>
                    </React.Fragment>
                ))}
                <Corner />
            </Stats>
            {noticeOpen && (
                <Notice>
                    <AlarmIcon />
                    <NoticeText>08月12日上龙虎榜</NoticeText>
                    <IconButton aria-label="关闭" onClick={() => setNoticeOpen(false)}><CloseIcon /></IconButton>
                </Notice>
            )}
            <Band size="14px" tint="#f7f7f7" />

            <Tabs>
                {['分时', '五日', '日K', '周K', '月K'].map(name => (
                    <Tab key={name} active={period === name} onClick={() => setPeriod(name)}>{name}</Tab>
                ))}
                <Tab>更多<Triangle dir="down" w={20} h={13} color="#9a9a9a" /></Tab>
                <Tab aria-label="设置"><HexIcon /></Tab>
            </Tabs>
            <InfoLine>
                均价<Info tone="#dc8450" before="10px">9.59</Info>
                最新<Info tone={up} before="10px">9.72</Info>
                <Info tone={up}>+0.17</Info>
                <Info tone={up}>+1.78%</Info>
                <SignalLink href="#">升级盘中实时信号<Chevron w={12} h={22} color="#e8812f" stroke={2} /></SignalLink>
            </InfoLine>

            <Board>
                <div>
                    <PriceChart />
                    <TimeAxis>
                        <span>09:30</span>
                        <span>11:30/13:00</span>
                        <span>15:00</span>
                    </TimeAxis>
                    <RsiChart />
                </div>
                <Side>
                    <SideTabs>
                        <SideTab active>五档/明细</SideTab>
                        <SideTab>分价</SideTab>
                    </SideTabs>
                    <BookTable rows={sells} />
                    <Ratio><RatioSell style={{ width: '89.5%' }} /></Ratio>
                    <BookTable rows={buys} />
                    <DetailToggle>明细<Chevron dir="up" w={22} h={12} color={ink} stroke={2} /></DetailToggle>
                    <Book>
                        <tbody>
                            {trades.map(([price, volume, rise]) => (
                                <tr key={price}>
                                    <Time>11:27</Time>
                                    <TradePrice>{price}</TradePrice>
                                    <Volume rise={rise}>{volume}</Volume>
                                    <Arrow>
                                        <Triangle dir={rise ? 'up' : 'down'} w={24} h={13} color={rise ? '#fb3638' : '#5f9f3c'} />
                                    </Arrow>
                                </tr>
                            ))}
                        </tbody>
                    </Book>
                    <TenLink href="#">升级看十档行情<Chevron w={12} h={22} color={up} stroke={2} /></TenLink>
                </Side>
            </Board>

            <Chips>
                <Chip><PeakIcon />分时顶底</Chip>
                <Chip><LimitIcon />涨停揭秘</Chip>
                <Chip><StackIcon />筹码分布</Chip>
            </Chips>
            <Sectors>
                <SectorTitle>所属<Hot>板块</Hot></SectorTitle>
                <SectorList>
                    {sectors.map(([name, change]) => (
                        <Sector key={name}>
                            <SectorName long={name.length > 4}>{name}</SectorName>
                            <SectorChange>{change}</SectorChange>
                        </Sector>
                    ))}
                </SectorList>
            </Sectors>
            <Band size="22px" tint="#f3f4f9" />

            <BottomBar>
                <IndexBlock>
                    <IndexValue>11511.74<Chevron dir="up" w={22} h={12} color="#606060" stroke={2} /></IndexValue>
                    <IndexName>深证成指<IndexChange>+1.41%</IndexChange></IndexName>
                </IndexBlock>
                <TradeButton>买</TradeButton>
                <TradeButton>卖</TradeButton>
                <TradeButton>撤</TradeButton>
                <MoreButton><MoreIcon />更多</MoreButton>
            </BottomBar>
            <HomeArea>
                <HomeIndicator />
            </HomeArea>
        </>
    )
}

export default App
